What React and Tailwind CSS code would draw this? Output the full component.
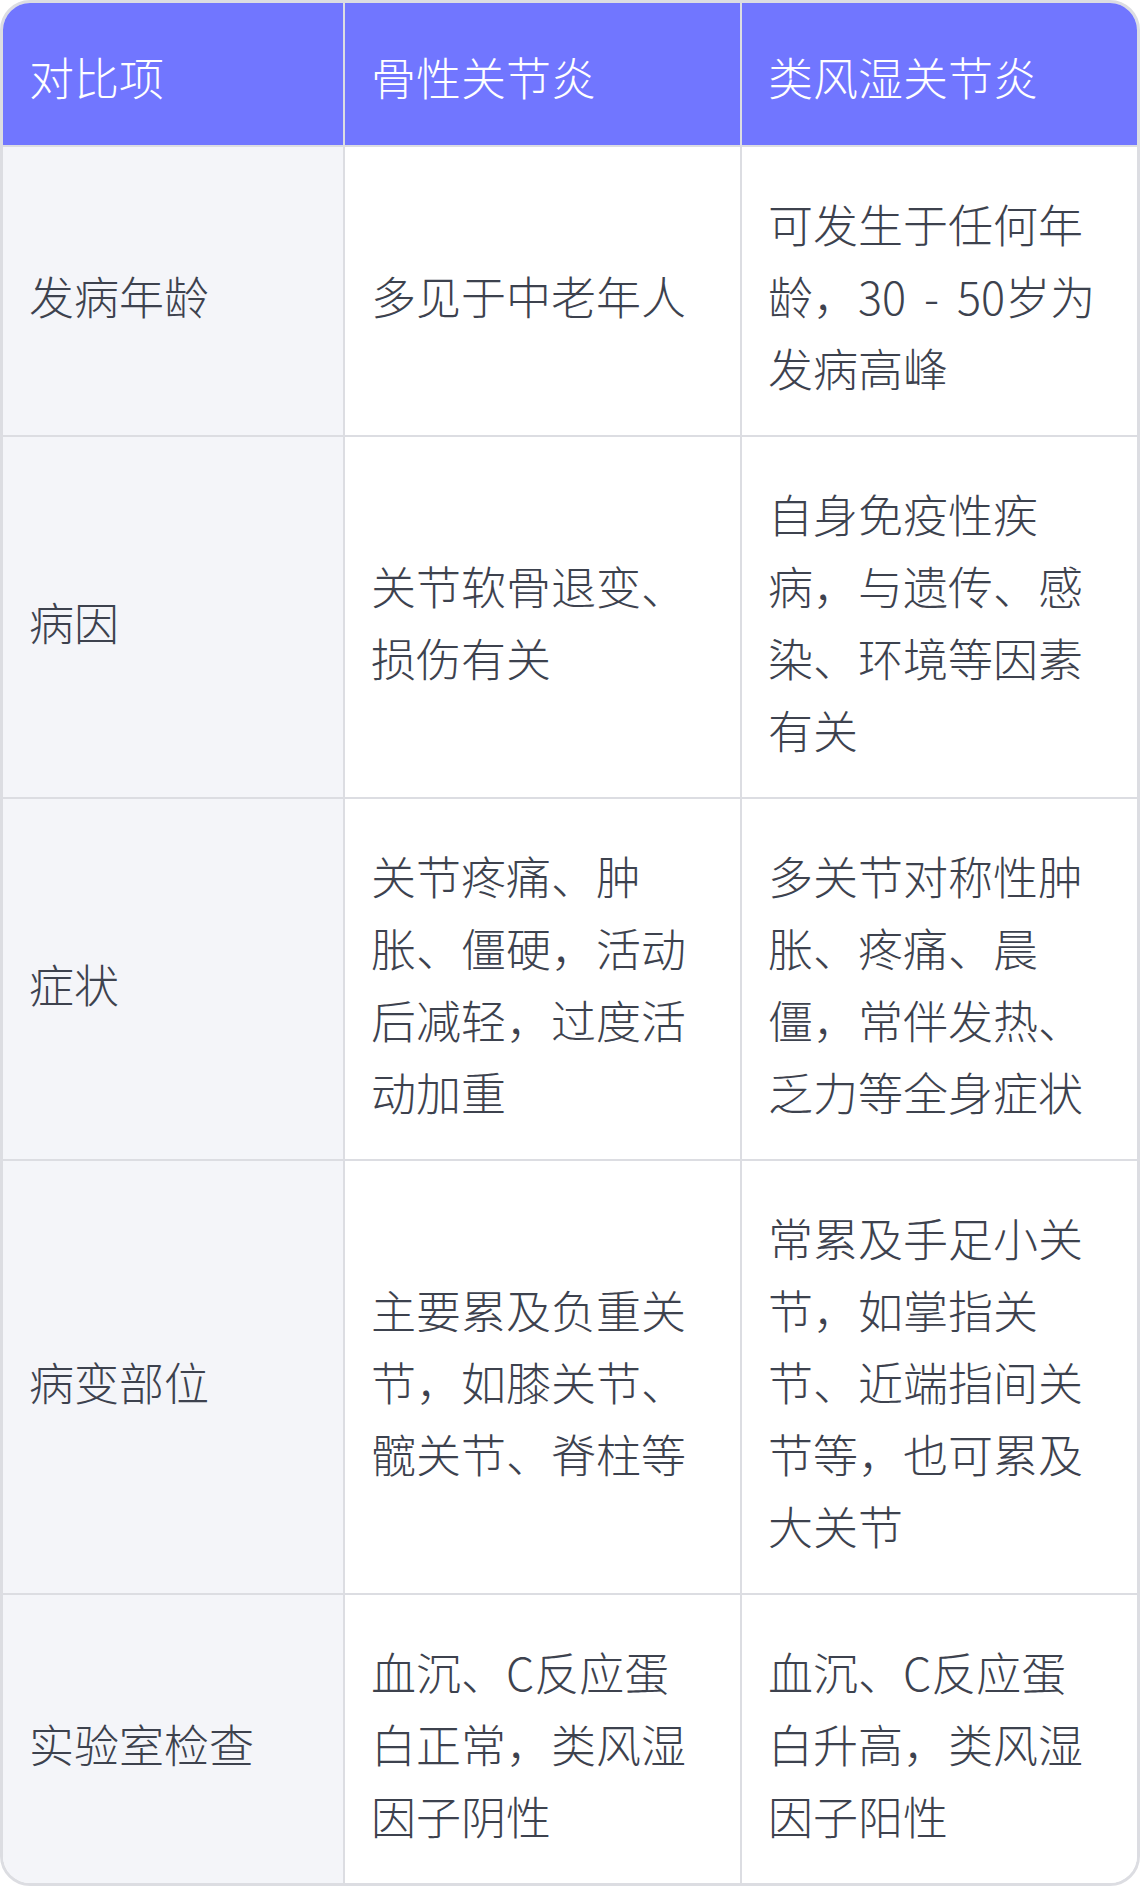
import React from "react";

const rows = [
  ["发病年龄", "多见于中老年人", "可发生于任何年龄，30 - 50岁为发病高峰"],
  ["病因", "关节软骨退变、损伤有关", "自身免疫性疾病，与遗传、感染、环境等因素有关"],
  ["症状", "关节疼痛、肿胀、僵硬，活动后减轻，过度活动加重", "多关节对称性肿胀、疼痛、晨僵，常伴发热、乏力等全身症状"],
  ["病变部位", "主要累及负重关节，如膝关节、髋关节、脊柱等", "常累及手足小关节，如掌指关节、近端指间关节等，也可累及大关节"],
  ["实验室检查", "血沉、C反应蛋白正常，类风湿因子阴性", "血沉、C反应蛋白升高，类风湿因子阳性"],
];

export default function App() {
  return (
    <div
      className="w-[1140px] bg-white"
      style={{
        fontFamily:
          '"Noto Sans CJK SC Light", "Noto Sans CJK SC DemiLight", "Noto Sans CJK SC", "Noto Sans", sans-serif',
      }}
    >
      <div className="overflow-hidden rounded-[30px] border-[3px] border-[#dcdde2] font-light text-[45px] leading-[72px] [word-spacing:8px]">
        <div className="grid grid-cols-[342px_397px_1fr] bg-[#7176ff] text-white">
          <div className="border-r-2 border-b-2 border-[#dcdde2] px-[26px] pt-[38px] pb-[32px]">对比项</div>
          <div className="border-r-2 border-b-2 border-[#dcdde2] px-[26px] pt-[38px] pb-[32px]">骨性关节炎</div>
          <div className="border-b-2 border-[#dcdde2] px-[26px] pt-[38px] pb-[32px]">类风湿关节炎</div>
        </div>
        {rows.map((r, i) => {
          const last = i === rows.length - 1;
          const b = last ? "" : "border-b-2";
          return (
            <div key={i} className="grid grid-cols-[342px_397px_1fr] text-[#3d424e]">
              <div className={`flex items-center bg-[#f4f5f9] border-r-2 ${b} border-[#dcdde2] px-[26px] pt-[41px] pb-[31px]`}>
                {r[0]}
              </div>
              <div className={`flex items-center bg-white border-r-2 ${b} border-[#dcdde2] px-[26px] pt-[41px] pb-[31px]`}>
                <span>{r[1]}</span>
              </div>
              <div className={`flex items-center bg-white ${b} border-[#dcdde2] px-[26px] pt-[41px] pb-[31px]`}>
                <span>{r[2]}</span>
              </div>
            </div>
          );
        })}
      </div>
    </div>
  );
}
